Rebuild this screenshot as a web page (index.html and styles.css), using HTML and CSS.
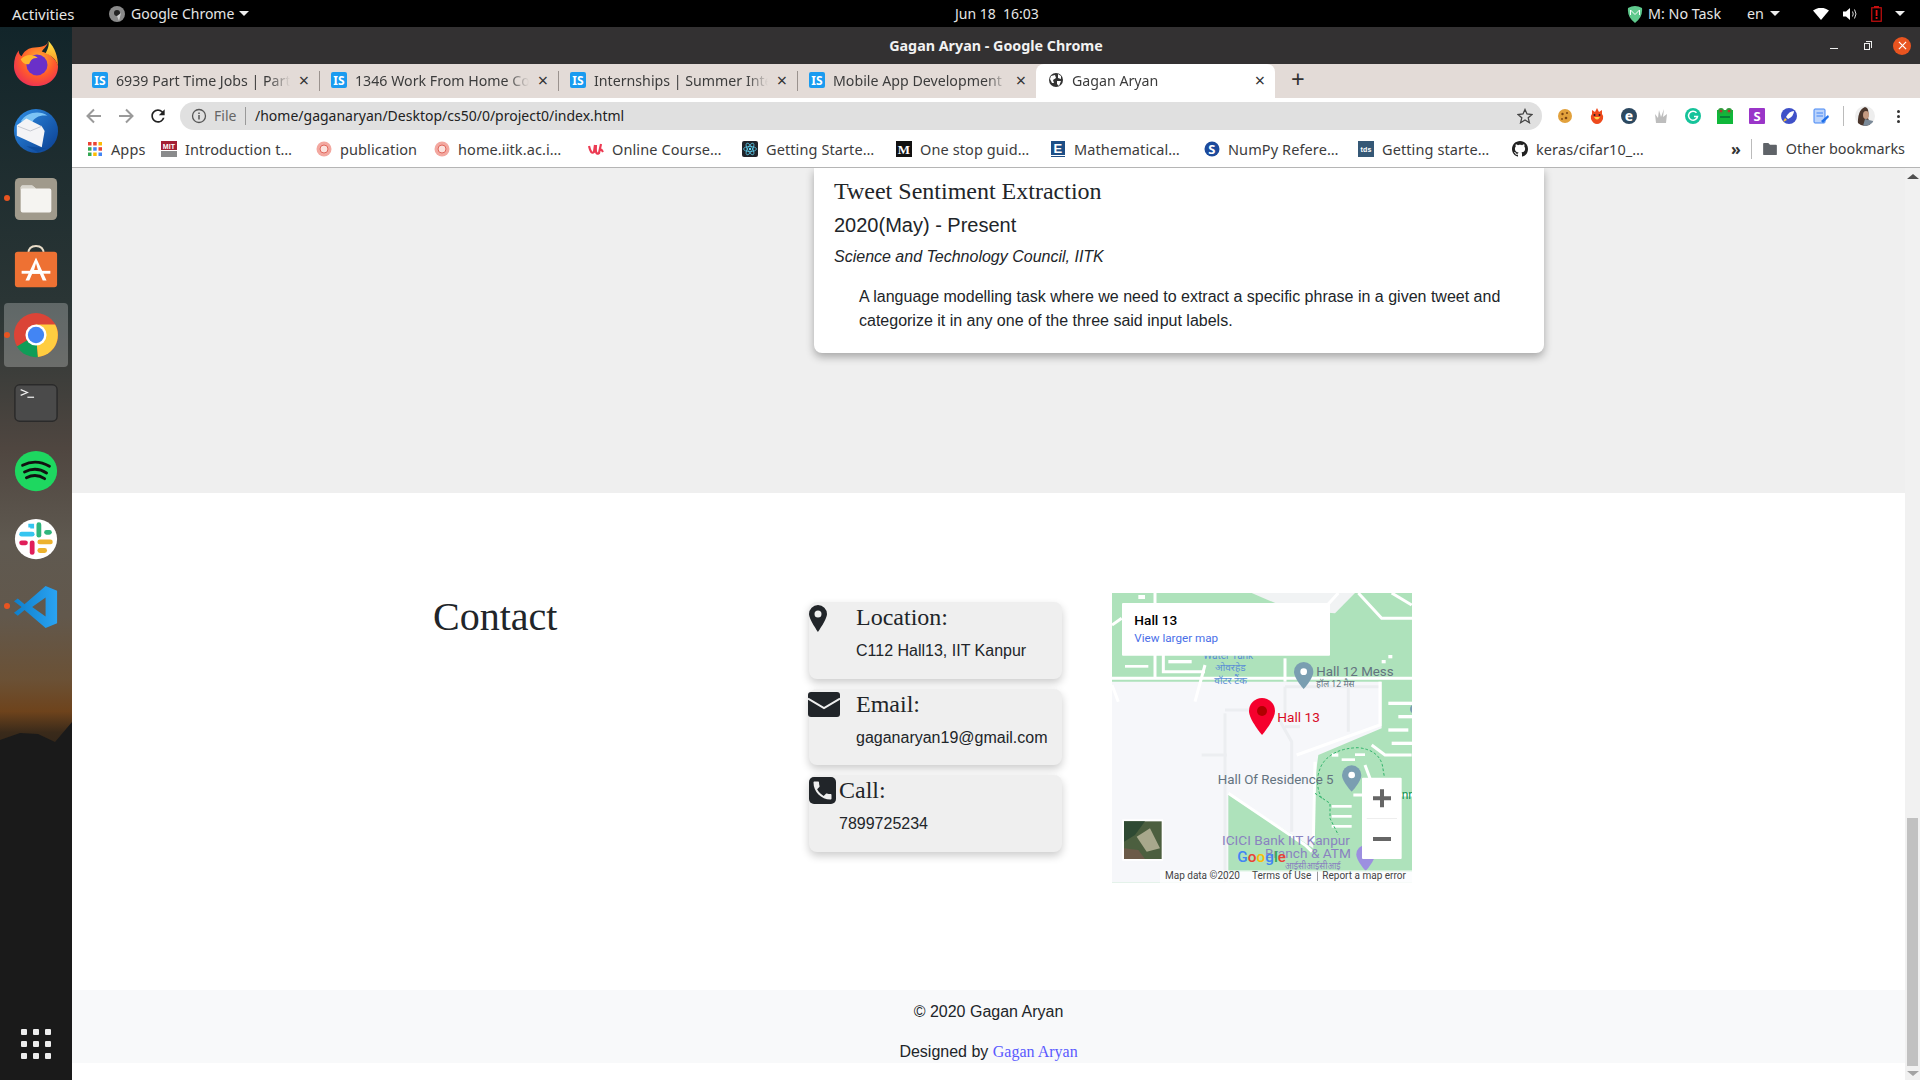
FILE: index.html
```html
<!DOCTYPE html>
<html lang="en">
<head>
<meta charset="utf-8">
<title>Gagan Aryan - Google Chrome</title>
<link rel="stylesheet" href="styles.css">
</head>
<body>
<svg class="defs" width="0" height="0">
  <defs>
    <radialGradient id="ff" cx=".55" cy=".4" r=".7"><stop offset="0" stop-color="#ffb02e"/><stop offset=".55" stop-color="#ff5a2c"/><stop offset="1" stop-color="#e8265f"/></radialGradient>
    <linearGradient id="ffy" x1="0" y1="0" x2="0" y2="1"><stop offset="0" stop-color="#ffe847"/><stop offset="1" stop-color="#ff8a1f"/></linearGradient>
    <linearGradient id="tb" x1="0" y1="0" x2="1" y2="1"><stop offset="0" stop-color="#2f8fe6"/><stop offset="1" stop-color="#0a3d8f"/></linearGradient>
    <linearGradient id="vs" x1="0" y1="0" x2="1" y2="0"><stop offset="0" stop-color="#0f7fcb"/><stop offset="1" stop-color="#2aa3f2"/></linearGradient>
  </defs>
</svg>

<header class="topbar">
  <div class="top-left">
    <span class="activities">Activities</span>
    <svg class="app-ico" viewBox="0 0 16 16"><circle cx="8" cy="8" r="8" fill="#8a8a8a"/><circle cx="8" cy="7" r="3" fill="#222"/><path d="M8 10 L12 7 L10 15Z" fill="#ccc"/></svg>
    <span>Google Chrome</span>
    <i class="caret caret-app"></i>
  </div>
  <span class="clock">Jun 18&nbsp; 16:03</span>
  <div class="top-right">
    <svg class="pomo" viewBox="0 0 16 18"><path d="M1 3 Q8 -1 15 3 Q16 12 8 18 Q0 12 1 3Z" fill="#5fc98d"/><path d="M3.500 5 L8 9.500 L12.500 5 M3.500 5 V10 M12.500 5 V10" stroke="#fff" stroke-width="1" fill="none"/></svg>
    <span class="task">M: No Task</span>
    <span class="lang">en</span>
    <i class="caret caret-lang"></i>
    <svg class="wifi" viewBox="0 0 16 12"><path d="M0 2.500 Q8 -3 16 2.500 L8 12Z" fill="#fff"/></svg>
    <svg class="vol" viewBox="0 0 16 14"><path d="M0 4.500 H3 L7 1 V13 L3 9.500 H0Z" fill="#fff"/><path d="M9.500 4.500 Q11 7 9.500 9.500 M11.500 2.500 Q14.500 7 11.500 11.500" stroke="#ddd" fill="none"/></svg>
    <svg class="batt" viewBox="0 0 11 16"><rect x=".75" y="1.750" width="9.500" height="13.500" fill="none" stroke="#c80f0f" stroke-width="1.200"/><rect x="3" y="0" width="5" height="2" fill="#c80f0f"/><rect x="4.700" y="4" width="1.800" height="6" fill="#e01010"/><rect x="4.700" y="11" width="1.800" height="2" fill="#e01010"/></svg>
    <i class="caret caret-sys"></i>
  </div>
</header>

<div class="desk">
  <nav class="dock">
    <svg class="mountain" viewBox="0 0 72 360" preserveAspectRatio="none"><path d="M0 20 L20 13 L38 14 L55 22 L72 2 V360 H0Z" fill="#1a1a1a"/></svg>
    <div class="dock-item"><svg class="dock-ico" viewBox="0 0 48 48"><path d="M37 1 C36 6 32 9 30 12 C38 14 45 20 47 27 C47 40 37 48 24 48 C10 48 1 38 1 27 C1 20 3 15 6 11 C6 14 7 16 9 17 C11 12 15 9 20 8 C27 7 35 8 37 1Z" fill="url(#ff)"/><path d="M37 1 C44 8 47 18 47 27 C45 20 40 16 34 14 C36 10 38 6 37 1Z" fill="url(#ffy)"/><circle cx="25" cy="26" r="11" fill="#6a30c9"/><path d="M8 20 C14 14 22 15 26 19 C20 18 18 22 17 25 C13 26 10 24 8 20Z" fill="#ffb52e"/></svg></div>
    <div class="dock-item"><svg class="dock-ico" viewBox="0 0 48 48"><circle cx="24" cy="24" r="23" fill="url(#tb)"/><path d="M8 14 C14 4 28 2 36 8 C28 7 22 10 20 15Z" fill="#7cc4f5"/><path d="M4 18 L14 11 L30 19 L33 24 L30 41 L4 29Z" fill="#f4f4f6"/><path d="M5 19 L18 24 L30 19" stroke="#c4c8d0" fill="none"/><path d="M14 40 L34 42 L26 46Z" fill="#0c4b9c"/></svg></div>
    <div class="dock-item"><svg class="dock-ico" viewBox="0 0 48 48"><rect x="2" y="2" width="44" height="44" rx="5" fill="#a09a8c"/><path d="M8 12 Q8 10 10 10 H20 L24 13 H38 Q40 13 40 15 V36 Q40 38 38 38 H10 Q8 38 8 36Z" fill="#f5f4f1"/><path d="M8 12 Q8 10 10 10 H20 L24 13 H10 Q8 13 8 15Z" fill="#d8d5cd"/></svg></div>
    <div class="dock-item"><svg class="dock-ico" viewBox="0 0 48 48"><path d="M16 10 Q16 2 24 2 Q32 2 32 10" fill="none" stroke="#e8dcc8" stroke-width="2"/><rect x="2" y="8" width="44" height="37" rx="3" fill="#ee7133"/><path d="M24 14 L13 38 H17 L20 31 H28 L31 38 H35Z M22 27 L24 20 L26 27Z" fill="#fff" fill-rule="evenodd"/><rect x="9" y="28" width="30" height="3" fill="#fff"/></svg></div>
    <div class="dock-item"><div class="dock-active"><svg class="dock-ico" viewBox="0 0 48 48"><circle cx="24" cy="24" r="23" fill="#db4437"/><path d="M24 24 L4 36 A23 23 0 0 0 26 47Z" fill="#0f9d58"/><path d="M24 24 L26 47 A23 23 0 0 0 44 13 L24 13Z" fill="#ffcd40"/><circle cx="24" cy="24" r="11" fill="#fff"/><circle cx="24" cy="24" r="8.500" fill="#4285f4"/></svg></div></div>
    <div class="dock-item"><svg class="dock-ico" viewBox="0 0 48 48"><rect x="2" y="5" width="44" height="38" rx="5" fill="#4a4a4a" stroke="#2a2a2a" stroke-width="1.500"/><path d="M8 10 L15 13 L8 16" fill="none" stroke="#eee" stroke-width="1.300"/><path d="M15 18 H22" stroke="#eee" stroke-width="1.300"/></svg></div>
    <div class="dock-item"><svg class="dock-ico" viewBox="0 0 48 48"><ellipse cx="24" cy="24" rx="22" ry="21" fill="#1ed760"/><path d="M10 18 Q24 11 38 19 M12 25 Q24 19 35 26 M14 31 Q24 26 33 32" fill="none" stroke="#111" stroke-width="3" stroke-linecap="round"/></svg></div>
    <div class="dock-item"><svg class="dock-ico" viewBox="0 0 48 48"><ellipse cx="24" cy="24" rx="22" ry="21" fill="#fff"/><path d="M9 19 H20" stroke="#36c5f0" stroke-width="5" stroke-linecap="round"/><path d="M16 10 H20 V13" stroke="#36c5f0" stroke-width="4" fill="none"/><path d="M27 9 V20" stroke="#2eb67d" stroke-width="5" stroke-linecap="round"/><path d="M35 17 H38" stroke="#2eb67d" stroke-width="5" stroke-linecap="round"/><path d="M39 27 H28" stroke="#ecb22e" stroke-width="5" stroke-linecap="round"/><path d="M28 36 H33" stroke="#ecb22e" stroke-width="5" stroke-linecap="round"/><path d="M20 28 V38" stroke="#e01e5a" stroke-width="5" stroke-linecap="round"/><path d="M9 28 H13" stroke="#e01e5a" stroke-width="5" stroke-linecap="round"/></svg></div>
    <div class="dock-item"><svg class="dock-ico" viewBox="0 0 48 48"><path d="M34 2 L46 7 V41 L34 46 L12 27 L5 33 L1 30 L9 24 L1 18 L5 15 L12 21Z M34 14 L20 24 L34 34Z" fill="url(#vs)" fill-rule="evenodd"/></svg></div>
    <div class="dock-grid"><i></i><i></i><i></i><i></i><i></i><i></i><i></i><i></i><i></i></div>
    <i class="run-dot run-files"></i><i class="run-dot run-chrome"></i><i class="run-dot run-code"></i>
  </nav>

  <main class="window">
    <div class="titlebar">
      <span></span>
      <span class="win-title">Gagan Aryan - Google Chrome</span>
      <div class="win-ctl">
        <i class="w-min"></i><i class="w-max"></i>
        <span class="w-close"><svg viewBox="0 0 10 10"><path d="M1 1 L9 9 M9 1 L1 9" stroke="#fff" stroke-width="1.300"/></svg></span>
      </div>
    </div>

    <div class="tabs">
      <div class="tab"><svg class="fav" viewBox="0 0 16 16"><rect width="16" height="16" rx="2" fill="#1a9bf0"/><text x="8" y="12.500" class="is-txt">IS</text></svg><span class="tab-title">6939 Part Time Jobs | Part</span><span class="tab-x">×</span></div>
      <div class="tab"><svg class="fav" viewBox="0 0 16 16"><rect width="16" height="16" rx="2" fill="#1a9bf0"/><text x="8" y="12.500" class="is-txt">IS</text></svg><span class="tab-title">1346 Work From Home Co</span><span class="tab-x">×</span></div>
      <div class="tab"><svg class="fav" viewBox="0 0 16 16"><rect width="16" height="16" rx="2" fill="#1a9bf0"/><text x="8" y="12.500" class="is-txt">IS</text></svg><span class="tab-title">Internships | Summer Inte</span><span class="tab-x">×</span></div>
      <div class="tab tab-last"><svg class="fav" viewBox="0 0 16 16"><rect width="16" height="16" rx="2" fill="#1a9bf0"/><text x="8" y="12.500" class="is-txt">IS</text></svg><span class="tab-title">Mobile App Development</span><span class="tab-x">×</span></div>
      <div class="tab tab-active"><svg class="fav globe" viewBox="0 0 16 16"><circle cx="8" cy="8" r="7" fill="#333"/><path d="M3 4 L7 3 L8 6 L5 8 L6 11 L4 11 L2 7Z M10 2 L13 4 L13 7 L10 6Z M9 9 L13 9 L11 14 L9 12Z" fill="#fff"/></svg><span class="tab-title">Gagan Aryan</span><span class="tab-x">×</span></div>
      <span class="new-tab">+</span>
    </div>

    <div class="toolbar">
      <span class="tb-btn"><svg viewBox="0 0 20 20"><path d="M17 10 H4 M10 3.500 L3.500 10 L10 16.500" fill="none" stroke="#9a9a9a" stroke-width="2"/></svg></span>
      <span class="tb-btn"><svg viewBox="0 0 20 20"><path d="M3 10 H16 M10 3.500 L16.500 10 L10 16.500" fill="none" stroke="#9a9a9a" stroke-width="2"/></svg></span>
      <span class="tb-btn"><svg viewBox="0 0 24 24"><path d="M17.650 6.350A7.958 7.958 0 0 0 12 4c-4.420 0-7.990 3.580-7.990 8s3.570 8 7.990 8c3.730 0 6.840-2.550 7.730-6h-2.080A5.990 5.990 0 0 1 12 18c-3.310 0-6-2.690-6-6s2.690-6 6-6c1.660 0 3.140.690 4.220 1.780L13 11h7V4l-2.350 2.350z" fill="#222"/></svg></span>
      <div class="omni">
        <svg class="omni-info" viewBox="0 0 16 16"><circle cx="8" cy="8" r="6.500" fill="none" stroke="#555" stroke-width="1.300"/><rect x="7.250" y="7" width="1.500" height="4.500" fill="#555"/><rect x="7.250" y="4.500" width="1.500" height="1.500" fill="#555"/></svg>
        <span class="omni-file">File</span>
        <i class="omni-sep"></i>
        <span class="omni-url">/home/gaganaryan/Desktop/cs50/0/project0/index.html</span>
        <svg class="omni-star" viewBox="0 0 16 16"><path d="M8 1.500 L10 6 L15 6.500 L11.200 9.800 L12.400 14.700 L8 12 L3.600 14.700 L4.800 9.800 L1 6.500 L6 6Z" fill="none" stroke="#444" stroke-width="1.300"/></svg>
      </div>
      <div class="exts">
        <span class="ext"><svg viewBox="0 0 16 16"><circle cx="8" cy="8" r="7" fill="#e2a13c"/><circle cx="5.500" cy="6" r="1.200" fill="#7a4312"/><circle cx="10" cy="5" r="1" fill="#7a4312"/><circle cx="9" cy="10" r="1.300" fill="#7a4312"/><circle cx="5" cy="11" r=".9" fill="#7a4312"/></svg></span>
        <span class="ext"><svg viewBox="0 0 16 16"><path d="M8 0 L10 4 L13 2 L13 6 Q15 8 14 11 Q12 16 8 16 Q4 16 2 11 Q1 8 3 6 L3 2 L6 4Z" fill="#ee4a1c"/><path d="M5 9 Q8 14 11 9" fill="#ffd34a"/><circle cx="5.500" cy="7" r="1" fill="#222"/><circle cx="10.500" cy="7" r="1" fill="#222"/></svg></span>
        <span class="ext"><svg viewBox="0 0 16 16"><circle cx="8" cy="8" r="8" fill="#2c4860"/><text x="8" y="12.500" class="ext-e">e</text></svg></span>
        <span class="ext"><svg viewBox="0 0 16 16"><path d="M3 15 L2 6 L5 10 L6 2 L8 9 L11 1 L10 9 L14 6 L13 15Z" fill="#bdbdbd"/></svg></span>
        <span class="ext"><svg viewBox="0 0 16 16"><circle cx="8" cy="8" r="8" fill="#15c39a"/><path d="M11.500 4.800 A4.500 4.500 0 1 0 12.500 8.500 H9" fill="none" stroke="#fff" stroke-width="1.500"/></svg></span>
        <span class="ext"><svg viewBox="0 0 16 16"><rect y="2" width="16" height="14" fill="#10b83a"/><circle cx="4" cy="3" r="3" fill="#2f9e3c"/><circle cx="12" cy="3" r="3" fill="#2f9e3c"/><circle cx="4" cy="3" r="1.300" fill="#b5342a"/><circle cx="12" cy="3" r="1.300" fill="#b5342a"/><path d="M3 9 H13" stroke="#043" stroke-width="1"/></svg></span>
        <span class="ext"><svg viewBox="0 0 16 16"><rect width="16" height="16" rx="1" fill="#9a35c8"/><text x="8" y="12.500" class="ext-s">S</text></svg></span>
        <span class="ext"><svg viewBox="0 0 16 16"><circle cx="8" cy="8" r="8" fill="#3f51c8"/><path d="M13 3 Q8 3 5 9 L7 11 Q13 8 13 3Z" fill="#fff"/><path d="M4 10 L2 14 L6 12Z" fill="#ffc936"/></svg></span>
        <span class="ext"><svg viewBox="0 0 16 16"><rect x="1" y="1" width="11" height="14" rx="1" fill="#bcd4fb" stroke="#4285f4"/><path d="M3.500 5 H10 M3.500 8 H10" stroke="#4285f4"/><path d="M8 13 L15 7 L16 9 L10 15Z" fill="#1f6fe8"/></svg></span>
        <i class="ext-sep"></i>
        <span class="avatar"><svg viewBox="0 0 20 20"><defs><clipPath id="av"><circle cx="10" cy="10" r="10"/></clipPath></defs><g clip-path="url(#av)"><rect width="20" height="20" fill="#eee"/><path d="M3 20 Q2 4 10 1 Q15 2 13 12 L16 20Z" fill="#4a362c"/><ellipse cx="11" cy="9" rx="3" ry="4" fill="#c59b82"/><path d="M8 20 L10 13 L18 15 L20 20Z" fill="#7b8a98"/></g></svg></span>
        <span class="kebab"><i></i><i></i><i></i></span>
      </div>
    </div>

    <div class="bookmarks">
      <div class="bm bm-apps"><svg class="fav" viewBox="0 0 16 16"><rect x="1" y="1" width="3.500" height="3.500" fill="#ea4335"/><rect x="6.200" y="1" width="3.500" height="3.500" fill="#ea4335"/><rect x="11.500" y="1" width="3.500" height="3.500" fill="#fbbc05"/><rect x="1" y="6.200" width="3.500" height="3.500" fill="#34a853"/><rect x="6.200" y="6.200" width="3.500" height="3.500" fill="#4285f4"/><rect x="11.500" y="6.200" width="3.500" height="3.500" fill="#ea4335"/><rect x="1" y="11.500" width="3.500" height="3.500" fill="#34a853"/><rect x="6.200" y="11.500" width="3.500" height="3.500" fill="#fbbc05"/><rect x="11.500" y="11.500" width="3.500" height="3.500" fill="#4285f4"/></svg><span>Apps</span></div>
      <div class="bm"><svg class="fav" viewBox="0 0 16 16"><rect width="16" height="9" fill="#a31f34"/><rect y="10" width="16" height="6" fill="#8a8b8c"/><text x="8" y="7.500" class="mit">MIT</text></svg><span>Introduction t…</span></div>
      <div class="bm bm-short"><svg class="fav" viewBox="0 0 16 16"><circle cx="8" cy="8" r="7.500" fill="#f3a8a0"/><circle cx="8" cy="8" r="4" fill="#fbe2de" stroke="#e0675c"/></svg><span>publication</span></div>
      <div class="bm"><svg class="fav" viewBox="0 0 16 16"><circle cx="8" cy="8" r="7.500" fill="#f3a8a0"/><circle cx="8" cy="8" r="4" fill="#fbe2de" stroke="#e0675c"/></svg><span>home.iitk.ac.i…</span></div>
      <div class="bm"><svg class="fav" viewBox="0 0 16 16"><path d="M1 5 Q3 14 6 11 L7 4 M8 4 Q7 15 11 12 L13 3 M13 8 L15 11" fill="none" stroke="#ec3a52" stroke-width="2.200"/></svg><span>Online Course…</span></div>
      <div class="bm"><svg class="fav" viewBox="0 0 16 16"><rect width="16" height="16" rx="2" fill="#20232a"/><ellipse cx="8" cy="8" rx="6.500" ry="2.500" fill="none" stroke="#61dafb" stroke-width=".7"/><ellipse cx="8" cy="8" rx="6.500" ry="2.500" fill="none" stroke="#61dafb" stroke-width=".7" transform="rotate(60 8 8)"/><ellipse cx="8" cy="8" rx="6.500" ry="2.500" fill="none" stroke="#61dafb" stroke-width=".7" transform="rotate(120 8 8)"/><circle cx="8" cy="8" r="1.200" fill="#61dafb"/></svg><span>Getting Starte…</span></div>
      <div class="bm"><svg class="fav" viewBox="0 0 16 16"><rect width="16" height="16" fill="#111"/><text x="8" y="12.500" class="med">M</text></svg><span>One stop guid…</span></div>
      <div class="bm"><svg class="fav" viewBox="0 0 16 16"><rect x="1" width="14" height="14" fill="#1d4e86"/><rect x="1" y="15" width="14" height="1" fill="#1d4e86"/><text x="8" y="12" class="ebook">E</text></svg><span>Mathematical…</span></div>
      <div class="bm"><svg class="fav" viewBox="0 0 16 16"><circle cx="8" cy="8" r="7.500" fill="#1c4a9c"/><text x="8" y="12.500" class="ext-s">S</text></svg><span>NumPy Refere…</span></div>
      <div class="bm"><svg class="fav" viewBox="0 0 16 16"><rect width="16" height="16" fill="#355876"/><text x="8" y="10.500" class="tds">tds</text></svg><span>Getting starte…</span></div>
      <div class="bm"><svg class="fav" viewBox="0 0 16 16"><path d="M8 0C3.580 0 0 3.580 0 8c0 3.540 2.290 6.530 5.470 7.590.400.070.550-.170.550-.380 0-.190-.010-.820-.010-1.490-2.010.370-2.530-.490-2.690-.940-.090-.230-.480-.940-.820-1.130-.280-.150-.680-.520-.010-.530.630-.010 1.080.580 1.230.820.720 1.210 1.870.870 2.330.660.070-.520.280-.870.510-1.070-1.780-.200-3.640-.890-3.640-3.950 0-.870.310-1.590.820-2.150-.080-.200-.360-1.020.080-2.120 0 0 .670-.210 2.200.820.640-.180 1.320-.270 2-.270.680 0 1.360.090 2 .270 1.530-1.040 2.200-.820 2.200-.820.440 1.100.160 1.920.080 2.120.510.560.820 1.270.820 2.150 0 3.070-1.870 3.750-3.650 3.950.290.250.540.730.540 1.480 0 1.070-.010 1.930-.010 2.200 0 .210.150.460.550.380A8.013 8.013 0 0016 8c0-4.420-3.580-8-8-8z" fill="#222"/></svg><span>keras/cifar10_…</span></div>
      <div class="bm-end">
        <span class="chev">»</span>
        <i class="bm-sep"></i>
        <svg class="folder" viewBox="0 0 16 14"><path d="M1 0 H6 L8 2 H15 Q16 2 16 3 V13 Q16 14 15 14 H1 Q0 14 0 13 V1 Q0 0 1 0Z" fill="#5f6368"/></svg>
        <span class="other-bm">Other bookmarks</span>
      </div>
    </div>

    <div class="viewport">
      <div class="page">
        <section class="experience">
          <article class="exp-card">
            <h3 class="exp-title">Tweet Sentiment Extraction</h3>
            <p class="exp-date">2020(May) - Present</p>
            <p class="exp-org">Science and Technology Council, IITK</p>
            <p class="exp-desc">A language modelling task where we need to extract a specific phrase in a given tweet and categorize it in any one of the three said input labels.</p>
          </article>
        </section>

        <section class="contact">
          <h2 class="contact-head">Contact</h2>
          <div class="contact-cards">
            <div class="c-card">
              <span class="c-ico"><svg class="ico-pin" viewBox="0 0 18 27"><path fill-rule="evenodd" d="M9 0a9 9 0 0 0-9 9c0 5 9 18 9 18s9-13 9-18a9 9 0 0 0-9-9zm0 5.500a3.500 3.500 0 1 1 0 7 3.500 3.500 0 0 1 0-7z" fill="#212529"/></svg></span>
              <div><h4 class="c-head">Location:</h4><p class="c-text">C112 Hall13, IIT Kanpur</p></div>
            </div>
            <div class="c-card">
              <span class="c-ico"><svg class="ico-mail" viewBox="0 0 32 25"><rect width="32" height="25" rx="3" fill="#212529"/><path d="M0 6.500 L16 16 L32 6.500" fill="none" stroke="#efefef" stroke-width="2"/></svg></span>
              <div><h4 class="c-head">Email:</h4><p class="c-text">gaganaryan19@gmail.com</p></div>
            </div>
            <div class="c-card">
              <span class="c-ico-call"><svg class="ico-call" viewBox="0 0 27 27"><rect width="27" height="27" rx="5" fill="#212529"/><g transform="translate(1.500 1.500)"><path d="M6.620 10.790c1.440 2.830 3.760 5.140 6.590 6.590l2.200-2.200c.270-.270.670-.360 1.020-.240 1.120.370 2.330.570 3.570.570.550 0 1 .450 1 1V20c0 .550-.450 1-1 1-9.390 0-17-7.610-17-17 0-.550.450-1 1-1h3.500c.550 0 1 .450 1 1 0 1.250.200 2.450.570 3.570.110.350.030.740-.250 1.020l-2.200 2.200z" fill="#efefef"/></g></svg></span>
              <div><h4 class="c-head">Call:</h4><p class="c-text">7899725234</p></div>
            </div>
          </div>
          <svg class="map" viewBox="21 24 900 870">
            <rect x="21" y="24" width="900" height="870" fill="#aee2bb"/>
            <path d="M21 290 H830 V430 L640 510 L625 620 V790 L370 625 V893 H21Z" fill="#f6f7fa"/>
            <path d="M440 24 H750 L690 85 L560 75Z" fill="#f1f3f4"/>
            <path d="M360 860 H921 V893 H360Z" fill="#f6f7fa"/>
            <g fill="none" stroke="#fff" stroke-width="9">
              <path d="M21 280 H921"/>
              <path d="M150 24 V280"/>
              <path d="M21 120 L50 100"/>
              <path d="M21 300 L40 350"/>
              <path d="M760 24 L830 100 L921 100"/>
              <path d="M700 24 L640 90"/>
              <path d="M920 60 L860 24"/>
              <path d="M540 290 V220"/>
              <path d="M825 290 V420 L575 510"/>
              <path d="M630 530 L625 770"/>
              <path d="M780 540 L810 620"/>
              <path d="M745 630 H921"/>
              <path d="M300 240 L270 350"/>
              <path d="M175 200 V260 H300"/>
              <path d="M920 510 H840 L800 480"/>
              <path d="M370 625 L600 780 L621 800"/>
            </g>
            <g fill="none" stroke="#eceef1" stroke-width="9">
              <path d="M360 385 V893"/>
              <path d="M360 375 H480"/>
              <path d="M520 400 L560 470 V740"/>
              <path d="M540 305 V390"/>
              <path d="M730 305 V440"/>
              <path d="M290 510 H365"/>
              <path d="M540 425 H585"/>
              <path d="M540 305 H820"/>
            </g>
            <g fill="#fff">
              <rect x="680" y="505" width="20" height="10"/><rect x="710" y="520" width="40" height="8"/><rect x="750" y="505" width="30" height="8"/><rect x="680" y="660" width="60" height="8"/><rect x="680" y="690" width="60" height="8"/><rect x="680" y="720" width="60" height="8"/><rect x="850" y="350" width="71" height="10"/><rect x="880" y="390" width="41" height="10"/><rect x="850" y="430" width="60" height="10"/><rect x="860" y="470" width="61" height="10"/><rect x="850" y="210" width="12" height="10"/><rect x="830" y="225" width="12" height="10"/><rect x="60" y="240" width="70" height="8"/><rect x="190" y="225" width="70" height="10"/><rect x="100" y="30" width="20" height="12"/>
            </g>
            <path d="M650 640 Q625 590 650 540 Q680 490 760 488 Q820 495 832 540 L838 575 M630 625 L675 655 L675 700 L700 750" fill="none" stroke="#2fb36a" stroke-width="3" stroke-dasharray="8 6"/>
            <text x="295" y="222" class="m-txt m-water">Water Tank</text>
            <text x="330" y="258" class="m-txt m-hin m-water">ओवरहेड</text>
            <text x="328" y="296" class="m-txt m-hin m-water">वॉटर टैंक</text>
            <path d="M567 260 a29 29 0 0 1 58 0 c0 20-29 52-29 52 s-29-32-29-52z" fill="#7a9eb1"/><circle cx="596" cy="260" r="10" fill="#fff"/>
            <text x="634" y="272" class="m-txt m-lbl">Hall 12 Mess</text>
            <text x="634" y="305" class="m-txt m-hin m-lbl">हॉल 12 मैस</text>
            <circle cx="930" cy="372" r="15" fill="#7a9eb1"/>
            <path d="M432 378 a39 39 0 0 1 78 0 c0 26-39 72-39 72 s-39-46-39-72z" fill="#f5002d"/><circle cx="471" cy="378" r="15" fill="#b00000"/>
            <text x="517" y="410" class="m-txt m-red">Hall 13</text>
            <text x="338" y="596" class="m-txt m-lbl">Hall Of Residence 5</text>
            <path d="M711 570 a29 29 0 0 1 58 0 c0 20-29 50-29 50 s-29-30-29-50z" fill="#7a9eb1"/><circle cx="740" cy="570" r="10" fill="#fff"/>
            <text x="351" y="780" class="m-txt m-poi">ICICI Bank IIT Kanpur</text>
            <text x="480" y="820" class="m-txt m-poi">Branch &amp; ATM</text>
            <text x="540" y="853" class="m-txt m-hin m-poi">आईसीआईसीआई</text>
            <path d="M754 808 a28 28 0 0 1 56 0 c0 20-28 50-28 50 s-28-30-28-50z" fill="#9c8fe0"/>
            <text x="890" y="642" class="m-txt m-grn">nn</text>
            <rect x="771" y="578" width="119" height="244" rx="3" fill="#fff"/>
            <rect x="785" y="699" width="91" height="2" fill="#e6e6e6"/>
            <path d="M804 634 H858 V646 H804Z M825 613 H837 V667 H825Z" fill="#666"/>
            <rect x="804" y="756" width="54" height="12" fill="#666"/>
            <rect x="51" y="703" width="124" height="124" rx="3" fill="#fff"/>
            <rect x="57" y="709" width="113" height="113" fill="#4c5f3f"/>
            <path d="M57 709 H120 L90 750 L57 770Z" fill="#2f4a33"/><path d="M95 755 L135 730 L165 790 L125 800Z" fill="#a8a88c"/><path d="M57 790 L100 795 L120 822 H57Z" fill="#6b5a48"/>
            <rect x="51" y="54" width="624" height="158" rx="3" fill="#fff"/>
            <text x="88" y="120" class="m-txt m-pop">Hall 13</text>
            <text x="88" y="172" class="m-txt m-link">View larger map</text>
            <text x="397" y="832" class="m-txt m-goog"><tspan fill="#4285f4">G</tspan><tspan fill="#ea4335">o</tspan><tspan fill="#fbbc05">o</tspan><tspan fill="#4285f4">g</tspan><tspan fill="#34a853">l</tspan><tspan fill="#ea4335">e</tspan></text>
            <rect x="165" y="856" width="756" height="38" fill="#fff" fill-opacity=".7"/>
            <text x="180" y="882" class="m-txt m-foot">Map data ©2020</text>
            <text x="441" y="882" class="m-txt m-foot">Terms of Use</text>
            <rect x="636" y="860" width="2" height="28" fill="#666"/>
            <text x="652" y="882" class="m-txt m-foot">Report a map error</text>
          </svg>
        </section>

        <footer class="foot">
          <p class="foot-line">© 2020 Gagan Aryan</p>
          <p class="foot-line">Designed by <a class="foot-link" href="#">Gagan Aryan</a></p>
        </footer>
      </div>
      <aside class="scrollbar">
        <i class="sb-up"></i>
        <i class="sb-thumb"></i>
        <i class="sb-down"></i>
      </aside>
    </div>
  </main>
</div>
</body>
</html>
```

FILE: styles.css
```css
* { box-sizing: border-box; }
html, body { margin: 0; padding: 0; height: 1080px; overflow: hidden; }
body { display: flex; flex-direction: column; font-family: "Noto Sans", sans-serif; background: #000; }
p, h2, h3, h4 { margin: 0; font-weight: 400; }
i { display: block; }
.defs { position: absolute; }

/* GNOME top bar */
.topbar { height: 27px; background: #000; color: #e6e6e6; display: flex; align-items: center; font-size: 14px; flex: none; }
.top-left { width: 955px; display: flex; align-items: center; padding-left: 12px; }
.activities { width: 97px; font-size: 15px; }
.app-ico { width: 16px; height: 16px; margin-right: 6px; }
.caret { width: 0; height: 0; border-left: 5px solid transparent; border-right: 5px solid transparent; border-top: 5px solid #eee; }
.caret-app { margin-left: 5px; }
.clock { font-size: 14px; width: 90px; white-space: nowrap; padding-bottom: 1px; }
.top-right { margin-left: auto; display: flex; align-items: center; font-size: 14.300px; }
.pomo { width: 16px; height: 18px; margin-right: 5px; }
.task { width: 99px; }
.lang { width: 23px; }
.caret-lang { margin-right: 33px; }
.wifi { width: 16px; height: 12px; margin-right: 14px; }
.vol { width: 16px; height: 14px; margin-right: 12px; }
.batt { width: 11px; height: 16px; margin-right: 13px; }
.caret-sys { margin-right: 15px; }

.desk { flex: 1; display: flex; min-height: 0; }

/* Dock */
.dock { width: 72px; flex: none; position: relative; display: flex; flex-direction: column; padding-top: 2px; background: linear-gradient(to bottom, #12252a 0, #2a3535 26%, #4f4640 40%, #5f5950 49%, #62584c 56%, #6b5135 62%, #6e431c 65%, #3a2a1a 67%, #1a1a1a 72%); }
.mountain { position: absolute; left: 0; bottom: 0; width: 72px; height: 360px; }
.dock-item { position: relative; height: 68px; display: flex; align-items: center; justify-content: center; flex: none; }
.dock-ico { width: 46px; height: 46px; }
.dock-active { width: 64px; height: 64px; border-radius: 4px; background: rgba(255,255,255,.25); display: flex; align-items: center; justify-content: center; }
.dock-grid { position: relative; margin: auto auto 21px; width: 30px; display: grid; grid-template-columns: repeat(3, 6px); gap: 6px; justify-content: space-between; }
.dock-grid i { width: 6px; height: 6px; border-radius: 1px; background: #eee; }
.run-dot { position: absolute; left: 4px; width: 6px; height: 6px; border-radius: 50%; background: #e95420; }
.run-files { top: 168px; }
.run-chrome { top: 305px; }
.run-code { top: 576px; }

.window { flex: 1; min-width: 0; display: flex; flex-direction: column; background: #fff; }

/* Title bar */
.titlebar { height: 37px; flex: none; background: #333132; color: #f2f2f2; display: grid; grid-template-columns: 1fr auto 1fr; align-items: center; }
.win-title { font-size: 14.300px; font-weight: 700; }
.win-ctl { display: flex; align-items: center; justify-content: flex-end; padding-right: 9px; }
.w-min { width: 8px; height: 1px; background: #eee; margin-top: 6px; margin-right: 26px; }
.w-max { width: 6px; height: 7px; border: 1px solid #eee; margin-right: 23px; margin-top: 2px; box-shadow: 1px -1px 0 #333132, 2px -2px 0 #eee; }
.w-close { width: 18px; height: 18px; border-radius: 50%; background: #e95420; display: flex; align-items: center; justify-content: center; }
.w-close svg { width: 9px; height: 9px; }

/* Tabs */
.tabs { height: 34px; flex: none; background: #e3dbd7; display: flex; padding-left: 8px; align-items: flex-start; font-size: 14.200px; color: #3c3c3c; }
.tab { width: 239px; height: 34px; padding: 0 0 2px 12px; display: flex; align-items: center; position: relative; }
.tab::after { content: ""; position: absolute; right: -1px; top: 7px; bottom: 7px; width: 1px; background: #9a928e; }
.tab-last::after, .tab-active::after { display: none; }
.tab-active { background: #fff; border-radius: 8px 8px 0 0; height: 38px; padding-bottom: 6px; position: relative; z-index: 1; }
.fav { width: 16px; height: 16px; flex: none; }
.tab-title { margin-left: 8px; width: 174px; white-space: nowrap; overflow: hidden; -webkit-mask-image: linear-gradient(to right, #000 88%, transparent 100%); mask-image: linear-gradient(to right, #000 88%, transparent 100%); }
.tab-x { margin-left: 6px; width: 16px; text-align: center; font-size: 18px; line-height: 1; color: #333; }
.is-txt { font: 700 12px "Noto Sans", sans-serif; fill: #fff; text-anchor: middle; }
.new-tab { margin-left: 16px; font-size: 24px; line-height: 30px; color: #333; font-weight: 400; }

/* Toolbar */
.toolbar { height: 32px; flex: none; background: #fff; display: flex; align-items: flex-end; padding: 0 6px; position: relative; }
.tb-btn { width: 32px; height: 28px; display: flex; align-items: center; justify-content: center; }
.tb-btn svg { width: 20px; height: 20px; }
.omni { margin-left: 6px; flex: 1; height: 28px; background: #e0e0e0; border-radius: 14px; display: flex; align-items: center; padding: 0 9px 2px 11px; font-size: 14px; }
.omni-info { width: 16px; height: 16px; margin-top: 2px; }
.omni-file { margin-left: 7px; color: #666; width: 24px; }
.omni-sep { width: 1px; height: 18px; background: #999; margin-left: 7px; margin-top: 2px; }
.omni-url { margin-left: 9px; color: #222; white-space: nowrap; }
.omni-star { width: 16px; height: 16px; margin-left: auto; margin-top: 2px; }
.exts { display: flex; align-items: center; height: 28px; }
.ext { width: 32px; display: flex; justify-content: center; }
.exts .ext:first-child { margin-left: 7px; }
.ext svg { width: 16px; height: 16px; }
.ext-e { font: 700 14px "Noto Sans", sans-serif; fill: #fff; text-anchor: middle; }
.ext-s { font: 700 13px "Noto Sans", sans-serif; fill: #fff; text-anchor: middle; }
.ext-sep { width: 1px; height: 20px; background: #bbb; margin: 0 5px 0 6px; }
.avatar { width: 32px; display: flex; justify-content: center; }
.avatar svg { width: 20px; height: 20px; }
.kebab { width: 32px; margin-left: 1px; display: flex; flex-direction: column; align-items: center; gap: 2px; }
.kebab i { width: 3px; height: 3px; border-radius: 50%; background: #333; }

/* Bookmarks */
.bookmarks { height: 38px; flex: none; background: #fff; border-bottom: 1px solid #b5b5b5; display: flex; align-items: center; padding-left: 15px; font-size: 14.500px; letter-spacing: .1px; color: #3c3c3c; white-space: nowrap; }
.bm { width: 154px; display: flex; align-items: center; gap: 8px; flex: none; }
.bm-apps { width: 74px; }
.bm-short { width: 118px; }
.bm:nth-child(2) { width: 155px; }
.bm-end { margin-left: auto; display: flex; align-items: center; padding-right: 15px; }
.other-bm { font-size: 14.400px; letter-spacing: 0; }
.chev { font-size: 16px; color: #333; font-weight: 700; margin-right: 10px; margin-left: -3px; }
.bm-sep { width: 1px; height: 20px; background: #bbb; margin-right: 11px; }
.folder { width: 14px; height: 12px; margin-right: 9px; }
.mit { font: 700 7px "Liberation Sans", sans-serif; fill: #fff; text-anchor: middle; }
.med { font: 700 13px "Liberation Serif", serif; fill: #fff; text-anchor: middle; }
.ebook { font: 700 13px "Liberation Sans", sans-serif; fill: #fff; text-anchor: middle; }
.tds { font: 700 7px "Liberation Sans", sans-serif; fill: #fff; text-anchor: middle; }

/* Page */
.viewport { flex: 1; min-height: 0; display: flex; background: #fff; }
.page { flex: 1; min-width: 0; color: #212529; font-family: "Liberation Sans", sans-serif; font-size: 16px; line-height: 24px; overflow: hidden; }
.experience { height: 325px; background: #efefef; padding-left: 742px; }
.exp-card { width: 730px; height: 185px; background: #fff; border-radius: 0 0 8px 8px; box-shadow: 0 4px 8px rgba(0,0,0,.3); padding: 9px 20px 0; }
.exp-title { font: 400 24px/29px "Liberation Serif", serif; }
.exp-date { font-size: 20px; line-height: 24px; margin-top: 7px; }
.exp-org { font-style: italic; margin-top: 8px; }
.exp-desc { padding-left: 25px; margin-top: 16px; }

.contact { height: 497px; background: #fff; display: flex; align-items: flex-start; padding: 100px 0 0 361px; }
.contact-head { width: 376px; font: 400 40px/48px "Liberation Serif", serif; }
.contact-cards { width: 253px; margin-top: 9px; display: flex; flex-direction: column; gap: 10px; }
.c-card { height: 76.500px; padding-top: 1px; background: #efefef; border-radius: 8px; box-shadow: 0 4px 8px rgba(0,0,0,.2); display: flex; }
.c-ico { width: 47px; flex: none; padding-top: 2px; }
.c-ico-call { width: 30px; flex: none; padding-top: 1px; }
.ico-pin { display: block; width: 18px; height: 27px; }
.ico-mail { display: block; width: 32px; height: 25px; margin: 0 0 0 -1px; }
.ico-call { display: block; width: 27px; height: 27px; }
.c-head { font: 400 24px/29px "Liberation Serif", serif; margin-bottom: 7px; }
.c-text { line-height: 24px; white-space: nowrap; }
.map { width: 300px; height: 290px; margin-left: 50px; flex: none; display: block; }
.m-txt { font-family: Roboto, sans-serif; }
.m-hin { font-family: "Noto Sans", "Noto Sans Devanagari", sans-serif; font-size: 28px; }
.m-water { fill: #5b8fd6; font-size: 30px; }
.m-lbl { fill: #63737f; font-size: 40px; }
.m-hin.m-lbl { font-size: 26px; }
.m-red { fill: #d80a1f; font-size: 41px; }
.m-poi { fill: #8a82c0; font-size: 41px; }
.m-hin.m-poi { font-size: 26px; }
.m-grn { fill: #0a8f4f; font-size: 36px; }
.m-pop { fill: #000; font-size: 41px; font-weight: 500; }
.m-link { fill: #4a6fe8; font-size: 35px; }
.m-goog { font-size: 46px; font-weight: 500; }
.m-foot { fill: #444; font-size: 30px; }

.foot { height: 73px; background: #f8f9fa; padding-top: 10px; text-align: center; }
.foot-line { margin-bottom: 16px; }
.foot-link { color: #5a5aff; font-family: "Liberation Serif", serif; text-decoration: none; }

/* Scrollbar */
.scrollbar { width: 15px; flex: none; background: #f1f1f1; display: flex; flex-direction: column; align-items: center; padding: 6px 0 4px; }
.sb-up { width: 0; height: 0; border-left: 6px solid transparent; border-right: 6px solid transparent; border-bottom: 5px solid #505050; }
.sb-thumb { width: 11px; height: 248px; background: #c1c1c1; margin-top: auto; }
.sb-down { width: 0; height: 0; border-left: 6px solid transparent; border-right: 6px solid transparent; border-top: 5px solid #a3a3a3; margin-top: 5px; }
```
